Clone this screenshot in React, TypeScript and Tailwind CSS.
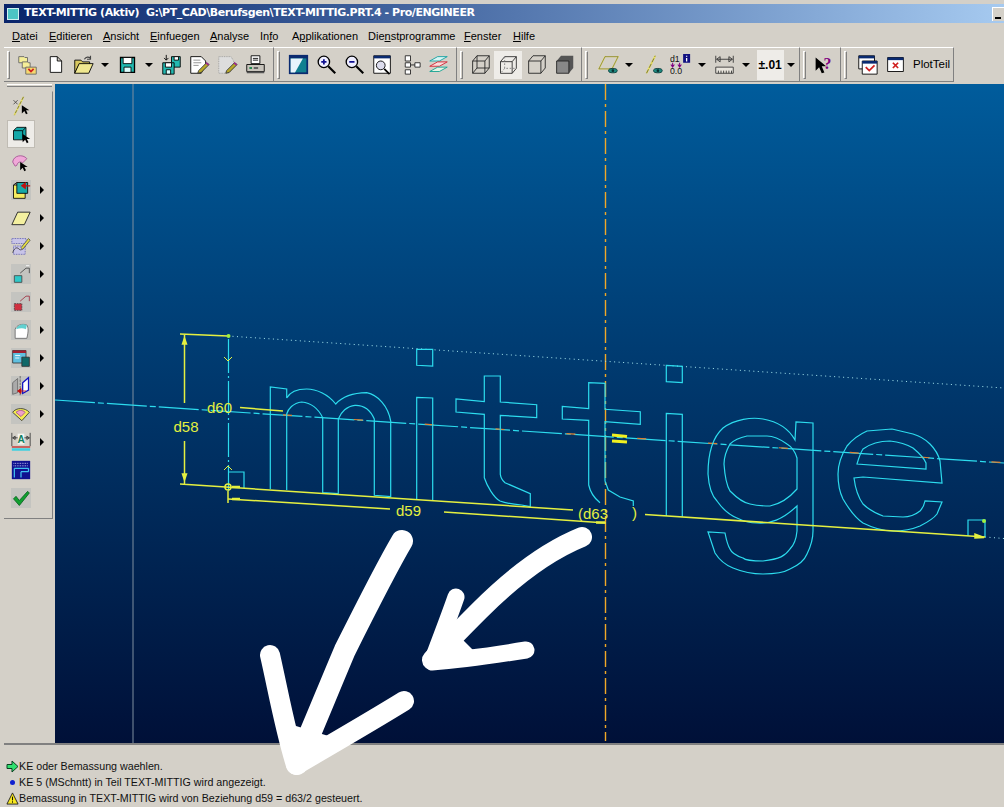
import type { ReactNode } from "react"

function Ic({ children, size = 24 }: { children: ReactNode; size?: number }) {
  return (
    <svg width={size} height={size} viewBox="0 0 24 24" className="block">
      {children}
    </svg>
  )
}

const k = "#000"
const eye = (
  <g>
    <ellipse cx="17" cy="19" rx="5" ry="2.5" fill="#1d8a80" stroke="#0b3a3a" />
    <circle cx="17" cy="19" r="1.5" fill="#083030" />
  </g>
)

const toolIcons: Record<string, ReactNode> = {
  tree: (
    <>
      <path d="M2 3h6l1 1h3v6H2z" fill="#f5ee98" stroke="#666" />
      <path d="M6 9h6l1 1h2v6H6z" fill="#f5ee98" stroke="#666" />
      <path d="M10 15h12v8H10z" fill="#f5d870" stroke="#666" />
      <path d="M13 17l3 3 3-3" fill="none" stroke="#d02020" strokeWidth="2" />
    </>
  ),
  page: <path d="M6 3h8l5 5v13H6z M14 3v5h5" fill="#fff" stroke={k} />,
  open: (
    <>
      <path d="M2 7h7l2 2h8v3H7L2 22z" fill="#d8c860" stroke={k} />
      <path d="M2 22l5-11h16l-5 11z" fill="#f0e890" stroke={k} />
      <path d="M13 6c2-3 5-3 7-1M20 2v4h-4" fill="none" stroke="#444" strokeWidth="1.3" />
    </>
  ),
  save: (
    <>
      <path d="M4 4h16v17H4z" fill="#22b8b0" stroke={k} strokeWidth="1.5" />
      <path d="M7 4h10v7H7z" fill="#fff" stroke={k} />
      <path d="M8 15h8v6H8z" fill="#dff" stroke={k} />
    </>
  ),
  saveall: (
    <>
      <path d="M12 3h10v12H12z" fill="#22b8b0" stroke={k} />
      <path d="M15 3h5v4h-5z" fill="#fff" stroke={k} />
      <path d="M2 10h13v13H2z" fill="#22b8b0" stroke={k} />
      <path d="M5 10h7v5H5z" fill="#fff" stroke={k} />
      <path d="M6 18h5v5H6z" fill="#dff" stroke={k} />
      <path d="M6 1v6M3.500 4.500L6 7l2.500-2.500" fill="none" stroke={k} />
    </>
  ),
  docpen: (
    <>
      <path d="M2 3h12l5 5v5l-5 9H2z" fill="#fff" stroke={k} />
      <path d="M5 7h8M5 10h9M5 13h6" stroke="#888" />
      <path d="M11 19l9-9 3 2-9 9-4 1z" fill="#b8a828" stroke="#333" />
      <path d="M19 11l3 2 1-1-3-3z" fill="#a02890" />
    </>
  ),
  dotpen: (
    <>
      <path d="M2 3h14l3 5v5l-5 9H2z" fill="#ddd" stroke="#999" strokeDasharray="1 1" />
      <path d="M11 19l9-9 3 2-9 9-4 1z" fill="#b8a828" stroke="#333" />
      <path d="M19 11l3 2 1-1-3-3z" fill="#a02890" />
    </>
  ),
  print: (
    <>
      <path d="M7 2h10v9H7z" fill="#fff" stroke={k} />
      <path d="M9 5h6M9 7h6" stroke={k} />
      <path d="M2 12h20v8H2z" fill="#c8c4bc" stroke={k} />
      <path d="M2 20h20v2H2z" fill="#555" />
      <path d="M5 16h3" stroke="#108040" strokeWidth="2" />
      <path d="M10 16h5" stroke="#555" strokeWidth="2" />
    </>
  ),
  repaint: (
    <>
      <path d="M1 1h22v22H1z" fill="#0a2a70" />
      <path d="M3 5h18v16H3z" fill="#108090" />
      <path d="M3 5h14L8 21H3z" fill="#e8f4fc" />
    </>
  ),
  zoomin: (
    <>
      <circle cx="9" cy="9" r="6.500" fill="#eef" stroke={k} strokeWidth="1.500" />
      <path d="M6 9h6M9 6v6" stroke="#101090" strokeWidth="2" />
      <path d="M14 14l8 8" stroke={k} strokeWidth="2.500" />
    </>
  ),
  zoomout: (
    <>
      <circle cx="9" cy="9" r="6.500" fill="#eef" stroke={k} strokeWidth="1.500" />
      <path d="M6 9h6" stroke="#101090" strokeWidth="2" />
      <path d="M14 14l8 8" stroke={k} strokeWidth="2.500" />
    </>
  ),
  zoomwin: (
    <>
      <path d="M2 2h19v20H2z" fill="#fff" stroke={k} />
      <path d="M2 2h19v3H2z" fill="#0a2a70" />
      <circle cx="10" cy="13" r="5" fill="#dde" stroke={k} />
      <path d="M14 17l6 6" stroke={k} strokeWidth="2" />
    </>
  ),
  nodes: (
    <>
      <path d="M6 2h6v6H6zM6 18h6v5H6zM6 10h6v5H6zM17 10h6v5h-6z" fill="#fff" stroke="#222" />
      <path d="M12 12.500h5" stroke="#222" />
    </>
  ),
  layers: (
    <>
      <path d="M2 8l9-5h11l-9 5z" fill="#d8f4f4" stroke="#10a0a0" />
      <path d="M2 14l9-5h11l-9 5z" fill="#fbdcdc" stroke="#d02030" />
      <path d="M2 20l9-5h11l-9 5z" fill="#e4f4e4" stroke="#10a090" />
    </>
  ),
  wire: <path d="M3 8h14v14H3zM3 8l5-6h14v14l-5 6M8 2v14h14M8 16l-5 6M17 8l5-6" fill="none" stroke="#222" />,
  wirehid: (
    <>
      <path d="M3 8h14v14H3zM3 8l5-6h14v14l-5 6M17 8l5-6" fill="none" stroke="#222" />
      <path d="M8 2v14h14M8 16l-5 6" fill="none" stroke="#777" strokeDasharray="2 2" />
    </>
  ),
  hidden: <path d="M3 8h14v14H3zM3 8l5-6h14v14l-5 6M17 8l5-6" fill="none" stroke="#222" />,
  shade: (
    <>
      <path d="M3 8l5-6h14v14l-5 6z" fill="#555" />
      <path d="M3 8h14v14H3z" fill="#888" stroke="#222" />
    </>
  ),
  planes: (
    <>
      <path d="M1 17L8 3h15l-7 14z" fill="none" stroke="#e8e060" strokeWidth="1.500" />
      <path d="M1 17L8 3h15l-7 14z" fill="none" stroke="#333" strokeWidth=".5" />
      {eye}
    </>
  ),
  axes: (
    <>
      <path d="M4 22L14 2" stroke="#e8e060" strokeWidth="2" />
      <path d="M4 22L14 2" stroke="#333" strokeWidth=".7" strokeDasharray="5 2" />
      {eye}
    </>
  ),
  dims: (
    <>
      <text x="0" y="9" fontSize="10" fill="#111" fontFamily="Liberation Sans, sans-serif">d1</text>
      <text x="0" y="23" fontSize="10" fill="#111" fontFamily="Liberation Sans, sans-serif">0.0</text>
      <path d="M3 10v5M1 12l2 3 2-3M11 10v5M9 12l2 3 2-3" fill="none" stroke="#800080" strokeWidth="1.200" />
      <path d="M15 0h8v10h-8z" fill="#101080" />
      <path d="M19 2v1M19 4.500v4" stroke="#fff" strokeWidth="1.500" />
    </>
  ),
  ruler: (
    <>
      <path d="M2 2v8M22 2v8M3 6h18M3 6l4-3v6zM21 6l-4-3v6z" fill="none" stroke="#333" />
      <path d="M2 15h20v7H2z" fill="#e8e4dc" stroke="#333" />
      <path d="M5 19v3M8 19v3M11 19v3M14 19v3M17 19v3M20 19v3" stroke="#333" />
    </>
  ),
  help: (
    <>
      <path d="M3 4l0 15 4-4 3 7 3-1-3-7h5z" fill={k} />
      <text x="12" y="17" fontSize="18" fontWeight="700" fill="#800080" fontFamily="Liberation Serif, serif">?</text>
    </>
  ),
  winok: (
    <>
      <path d="M2 2h18v15H2z" fill="#fff" stroke={k} />
      <path d="M2 2h18v3H2z" fill="#0a2a70" />
      <path d="M6 8h17v15H6z" fill="#fff" stroke={k} />
      <path d="M6 8h17v3H6z" fill="#0a2a70" />
      <path d="M10 15l4 4 6-6" fill="none" stroke="#d02020" strokeWidth="2" />
    </>
  ),
  winx: (
    <>
      <path d="M3 4h18v16H3z" fill="#fff" stroke={k} />
      <path d="M3 4h18v3H3z" fill="#0a2a70" />
      <path d="M9 10l6 6M15 10l-6 6" stroke="#d02020" strokeWidth="2" />
    </>
  ),
}

const sideIcons: ReactNode[] = [
  <>
    <path d="M15 1L4 23" stroke="#e8e060" strokeWidth="2" />
    <path d="M15 1L4 23" stroke="#333" strokeWidth=".7" strokeDasharray="4 2" />
    <path d="M3 5l5 5M8 5l-5 5" stroke="#444" />
    <path d="M13 11v10l3-3 2 4 2-1-2-4h4z" fill={k} />
  </>,
  <>
    <path d="M3 8l4-4h11v11l-4 4H3z" fill="#16a8a8" stroke={k} />
    <path d="M3 8h11v11M14 8l4-4" fill="none" stroke={k} />
    <path d="M14 12v10l3-3 2 4 2-1-2-4h4z" fill={k} />
  </>,
  <>
    <path d="M2 12c1-8 12-10 17-4l-5 5c-3-2-6-1-7 3l-2 1z" fill="#f0a8d8" stroke="#a05090" />
    <path d="M11 12v10l3-3 2 4 2-1-2-4h4z" fill={k} />
  </>,
  <>
    <path d="M0 0h24v24H0z" fill="#c4c4c0" />
    <path d="M3 6h14v16H3z" fill="#f4ec60" stroke={k} />
    <path d="M7 3h13v13H7z" fill="#16a8a8" stroke={k} />
    <path d="M3 6l4-3" stroke={k} />
    <path d="M13 7h10M13 7l4-3v6z" stroke="#c01010" fill="#c01010" strokeWidth="1.500" />
  </>,
  <path d="M1 20L8 5h15l-7 15z" fill="#f4f0a0" stroke="#333" strokeWidth="1.200" />,
  <>
    <path d="M1 3h17v6H1zM3 12h14v10H3z" fill="#c8c4e8" stroke="#5050b0" strokeDasharray="1 1" />
    <path d="M2 20c3-8 6-6 8-4s5-1 7-4" fill="none" stroke="#333" />
    <path d="M12 14L21 3l2 2-9 11z" fill="#e8e040" stroke="#555" />
  </>,
  <>
    <path d="M0 0h24v24H0z" fill="#c4c4c0" />
    <path d="M4 14h9v8H4z" fill="#30c8c8" stroke="#444" />
    <path d="M11 11L18 5h4v6" fill="none" stroke="#444" />
    <path d="M18 2h4" stroke="#fff" />
  </>,
  <>
    <path d="M0 0h24v24H0z" fill="#c4c4c0" />
    <path d="M4 14h9v8H4z" fill="#d03040" stroke="#444" strokeDasharray="2 1" />
    <path d="M11 11L18 5h4v6" fill="none" stroke="#a03040" />
  </>,
  <>
    <path d="M0 0h24v24H0z" fill="#c4c4c0" />
    <path d="M5 22V11c2-5 8-7 14-5 2 3 2 8 0 16z" fill="#fff" stroke="#666" />
    <path d="M6 11c2-5 8-7 13-5l-1 5c-4-2-8-1-12 0z" fill="#60d0d0" />
  </>,
  <>
    <path d="M0 0h24v24H0z" fill="#c4c4c0" />
    <path d="M2 3h16v15H2z" fill="#60c0e0" stroke="#333" />
    <path d="M2 3h16v3H2z" fill="#a02030" />
    <path d="M13 11h9v11h-9z" fill="#0f6868" stroke="#333" />
    <path d="M5 9h6M5 12h5" stroke="#fff" />
  </>,
  <>
    <path d="M0 0h24v24H0z" fill="#c4c4c0" />
    <path d="M2 8l6-5v17l-6 2z" fill="#aaa" stroke="#666" />
    <path d="M14 8l7-6v15l-7 4z" fill="#fff" stroke="#1010c0" strokeWidth="1.500" />
    <path d="M11 0v24" stroke="#555" strokeDasharray="3 1" />
    <path d="M18 18H8M8 18l4-3v6z" stroke="#c01010" fill="#c01010" />
  </>,
  <>
    <path d="M0 0h24v24H0z" fill="#c4c4c0" />
    <path d="M2 10C6 4 17 4 22 10l-9 10z" fill="#f4ec50" stroke="#333" />
    <path d="M6 10c3-3 8-3 11 0l-5 5z" fill="#f0a0c8" stroke="#a05090" />
  </>,
  <>
    <path d="M1 1v16M23 1v16M2 7h20M2 7l3-2v4zM22 7l-3-2v4z" fill="none" stroke="#333" />
    <path d="M8 2h8v13H8z" fill="#f4f4f0" />
    <text x="12" y="13" textAnchor="middle" fontSize="12" fontWeight="700" fill="#108060" fontFamily="Liberation Sans, sans-serif">A</text>
    <path d="M1 18h22" stroke="#c02020" strokeWidth="1.500" />
    <path d="M1 21h22" stroke="#40d0e0" strokeWidth="3" />
  </>,
  <>
    <path d="M1 1h22v22H1z" fill="#101090" />
    <path d="M3 4h18M3 7h18" stroke="#e0e0ff" strokeDasharray="1 1" />
    <path d="M4 10h17M4 10v11M21 10v4M12 14h9M12 14v7" fill="none" stroke="#40c0f0" strokeWidth="1.500" />
  </>,
  <>
    <path d="M0 0h24v24H0z" fill="#c4c4c0" />
    <path d="M3 13l3-3 4 5L20 4l2 2-12 15z" fill="#10a030" stroke="#0a6020" />
  </>,
]

function Tool({ id, pressed }: { id: string; pressed?: boolean }) {
  return (
    <div className={`w-[28px] h-[28px] flex items-center justify-center ${pressed ? "bg-[#eeece8]" : ""}`}>
      <Ic size={pressed ? 20 : 21}>{toolIcons[id]}</Ic>
    </div>
  )
}

function Caret() {
  return <div className="w-[16px] flex justify-center"><div className="border-x-[4px] border-x-transparent border-t-[4px] border-t-black" /></div>
}

function Band({ children, className }: { children: ReactNode; className: string }) {
  return (
    <div className={`h-[35px] flex items-center shrink-0 border-t border-t-white border-r border-r-[#808080] border-b border-b-[#808080] pl-[3px] ${className}`}>
      <div className="w-[3px] h-[28px] border-l border-t border-white border-r border-b border-r-[#808080] border-b-[#808080] shrink-0" />
      {children}
    </div>
  )
}

const menu = [
  ["", "D", "atei", "w-[37px]"],
  ["", "E", "ditieren", "w-[54px]"],
  ["", "A", "nsicht", "w-[47px]"],
  ["", "E", "infuegen", "w-[60px]"],
  ["", "A", "nalyse", "w-[50px]"],
  ["In", "f", "o", "w-[32px]"],
  ["A", "p", "plikationen", "w-[76px]"],
  ["Die", "n", "stprogramme", "w-[96px]"],
  ["", "F", "enster", "w-[49px]"],
  ["", "H", "ilfe", "w-[40px]"],
]

function Drawing() {
  const lines = "#2cdcee"
  const dim = "#e4f040"
  return (
    <svg viewBox="55 83 949 660" width="949" height="660" className="block" fill="none">
      <path d="M133 83V743" stroke="#7f8f9f" strokeWidth="1" />
      <path d="M605.500 83V740" stroke="#f0a828" strokeWidth="1.400" strokeDasharray="16 4 3 4" />
      <path d="M55 399L1004 462" stroke={lines} strokeWidth="1.200" strokeDasharray="40 3 6 3" />
      <path d="M283 413.800L1004 461.700" stroke="#e08030" strokeWidth="1.200" strokeDasharray="9 62" />
      <path d="M228 335L1004 387" stroke="#a8e8f0" strokeDasharray="1 3.500" />
      <path d="M985 536L1004 537.500" stroke="#a8e8f0" strokeDasharray="1 3.500" />

      <g stroke={lines} strokeWidth="1.200">
        <path d="M270.300 488V386L286.700 388V397C290 391 298 388 306.700 388C316 388 328 393 335.700 403C342 396 352 392 366.700 391.700C378 394 388 405 390.700 420V495.700L374.300 494.300V418C370 408 363 404 355 404.300C347 405 341 411 338.300 418V492.700L322.700 491.700V416.700C318 407 311 402 301.700 401C293 402 288 408 286.700 413V489" />
        <path d="M416.700 498.300V396.300L432.700 397V499M416.700 348.300H432.700V365L416.700 364.300Z" />
        <path d="M484.300 375H500.300V401L536.700 403.700V416.700L500.300 414.300V473.300C501 478 503 480 505 481.700L530.300 492.700V505.700L521.700 504C510 503 505 502 500 500C494 497 487 485 484.300 476.700V413.300L456 411V398L484.300 400.700Z" />
        <path d="M600 501.700C594 497 590 490 588.700 484V419.300L562.300 418V405.300L588.700 407.700V381.700L605 382.300V408.300L640.300 410.700V423.300L605 420.700V480L608.300 489L620 496L633.300 500V505" />
        <path d="M666.300 515V412.300L682.300 413.300V515.700M666.300 364.300L682.300 365.300V381.700L666.300 380.700Z" />
        <path d="M795 439C790 430 780 421 763 418C752 416 735 418 723 427C713 436 708 452 708 473C709 488 712 495 717 500C724 510 732 515 737 517C745 521 750 522 757 522C770 523 782 519 797 505V530C796 541 793 545 790 548C785 555 780 558 763 560C752 560 745 559 743 557C737 555 732 553 730 548C727 543 726 537 725 532L708 531L715 552C720 560 728 565 733 567C745 572 755 573 763 573C775 573 785 571 790 568C799 564 805 558 807 553C811 545 813 538 813 530V422L796 421Z" />
        <path d="M797 457C795 450 792 446 787 443C780 438 772 435 767 435H747C738 437 733 440 730 443C726 450 724 456 724 463C725 478 727 485 730 490C737 497 744 502 750 503C758 505 765 505 770 505C780 503 790 496 797 488Z" />
        <path d="M942 482L940 460C938 452 934 447 930 443C925 438 920 435 913 433L892 428L867 430C858 434 852 439 847 445C842 453 838 463 838 473C838 485 840 492 843 498C850 510 857 518 863 522C875 528 885 530 893 530C905 530 913 528 920 525C928 521 934 517 937 513L942 501L925 500C924 505 922 508 920 510C915 514 908 516 903 516L883 515C875 512 868 508 863 503C858 496 855 485 854 477L863 476Z" />
        <path d="M857 463C859 456 861 451 863 448C870 443 880 440 890 440C900 441 908 444 913 447C919 452 924 457 926 462V468Z" />
        <path d="M228 471H244V487M968 535V519H985V536" />
        <path d="M228.500 338V490" strokeDasharray="34 3 2 3" />
      </g>

      <g stroke={dim} strokeWidth="1.500">
        <path d="M180 333L228 335M184.500 333V402M184.500 440V483M180 483L573 509M645 513.500L985 536" />
        <path d="M228 490V502" />
        <path d="M228 498L390 508M444 511L606 522" />
        <path d="M240 406.500L283 410" />
        <path d="M224 356L228 360L232 356M224 469L228 465L232 469" strokeWidth="1" />
        <circle cx="228" cy="486" r="3" />
        <path d="M232 486h8M232 498h8" strokeWidth="2.500" />
        <path d="M184.500 337l-2 6h4zM184.500 479l-2-6h4z" fill={dim} />
        <path d="M596 521.500h9" strokeWidth="2.500" />
        <path d="M975 533v4l9-.5z" fill={dim} />
      </g>
      <circle cx="228.500" cy="335" r="2" fill="#a0f040" />
      <circle cx="984" cy="520" r="2" fill="#a0f040" />
      <path d="M612 434l15 1.500M612 440l15 1" stroke="#f0f020" strokeWidth="3" />

      <g fill={dim} fontFamily="Liberation Sans, sans-serif" fontSize="15">
        <text x="173.500" y="431">d58</text>
        <text x="207" y="412">d60</text>
        <text x="396" y="515">d59</text>
        <text x="578" y="518">(d63</text>
        <text x="632" y="517">)</text>
      </g>
    </svg>
  )
}

export default function App() {
  return (
    <div className="relative w-[1004px] h-[807px] overflow-hidden bg-[#d4d0c8] pl-[4px] pt-[4px] flex flex-col font-['Liberation_Sans',sans-serif] text-[11px] text-black">
      {/* title */}
      <div className="h-[19px] shrink-0 flex items-center pl-[3px] bg-gradient-to-r from-[#0a246a] to-[#a6caf0]">
        <div className="w-[12px] h-[12px] mr-[5px] bg-[#4cc4c4] border border-[#d0f0f0]" />
        <span className="text-white text-[11px] font-bold font-['DejaVu_Sans',sans-serif] tracking-[-0.43px] whitespace-pre">TEXT-MITTIG (Aktiv)  G:\PT_CAD\Berufsgen\TEXT-MITTIG.PRT.4 - Pro/ENGINEER</span>
        <div className="ml-auto w-[12px] h-[14px] bg-[#d4d0c8] border-l border-t border-white flex items-end pl-[2px] pb-[2px]"><div className="w-[6px] h-[2px] bg-black" /></div>
      </div>

      {/* menu */}
      <div className="h-[24px] shrink-0 flex items-center pl-[8px] pt-[2px] text-[11px]">
        {menu.map(([a, u, b, w]) => (
          <span key={a + u + b} className={`${w} shrink-0 whitespace-nowrap`}>
            {a}<span className="underline">{u}</span>{b}
          </span>
        ))}
      </div>

      {/* toolbars */}
      <div className="h-[35px] shrink-0 flex items-center">
        <Band className="w-[270px]">
          <div className="w-[3px]" />
          <Tool id="tree" /><Tool id="page" /><Tool id="open" /><Caret /><Tool id="save" /><Caret /><Tool id="saveall" /><Tool id="docpen" /><Tool id="dotpen" /><Tool id="print" />
        </Band>
        <Band className="w-[183px]">
          <div className="w-[4px]" />
          <Tool id="repaint" /><Tool id="zoomin" /><Tool id="zoomout" /><Tool id="zoomwin" /><Tool id="nodes" /><Tool id="layers" />
        </Band>
        <Band className="w-[125px]">
          <div className="w-[3px]" />
          <Tool id="wire" /><Tool id="wirehid" pressed /><Tool id="hidden" /><Tool id="shade" />
        </Band>
        <Band className="w-[218px]">
          <div className="w-[7px]" />
          <Tool id="planes" /><Caret />
          <div className="w-[3px]" /><Tool id="axes" /><Tool id="dims" />
          <Caret />
          <div className="w-[2px]" /><Tool id="ruler" /><Caret />
          <div className="w-[3px]" />
          <div className="w-[28px] h-[30px] bg-[#eeece8] flex items-center justify-center font-bold text-[12px]">±.01</div>
          <Caret />
        </Band>
        <Band className="w-[41px]">
          <div className="w-[3px]" />
          <Tool id="help" />
        </Band>
        <Band className="w-[113px]">
          <div className="w-[6px]" />
          <Tool id="winok" /><Tool id="winx" />
          <span className="ml-[4px] text-[11.500px]">PlotTeil</span>
        </Band>
      </div>

      {/* main */}
      <div className="flex flex-1 min-h-0 mt-[1px] pt-[1px]">
        <div className="w-[51px] shrink-0 relative">
          <div className="h-[3px] mx-[3px] border-t border-white border-b border-b-[#808080]" />
          <div className="mt-[4px] flex flex-col pb-[6px] border-b border-b-[#808080] border-r border-r-[#808080] mr-[2px] border-t border-t-transparent">
            {sideIcons.map((icon, i) => (
              <div key={i} className="h-[28px] flex items-center relative">
                <div className={`ml-[3px] w-[28px] h-[28px] flex items-center justify-center ${i === 1 ? "bg-[#eeece8] border border-[#c0bcb4]" : ""}`}>
                  <Ic size={20}>{icon}</Ic>
                </div>
                {i >= 3 && i <= 12 && <div className="ml-[5px] border-y-[4px] border-y-transparent border-l-[4px] border-l-black" />}
              </div>
            ))}
          </div>
        </div>
        <div className="flex-1 min-w-0 h-[660px] bg-gradient-to-b from-[#005c9c] to-[#001038]">
          <Drawing />
        </div>
      </div>

      {/* messages */}
      <div className="h-[64px] shrink-0 border-t-2 border-t-[#808080] pt-[13px] text-[10.700px] leading-[16px] text-[#111]">
        <div className="flex items-center pl-[2px]">
          <svg width="13" height="13" viewBox="0 0 13 13"><path d="M1 4.500h5V1l6 5.500L6 12V8.500H1z" fill="#30e070" stroke="#0a4020" /></svg>
          <span>KE oder Bemassung waehlen.</span>
        </div>
        <div className="flex items-center pl-[6px]">
          <div className="w-[5px] h-[5px] rounded-full bg-[#1020d0] mr-[4px]" />
          <span>KE 5 (MSchntt) in Teil TEXT-MITTIG wird angezeigt.</span>
        </div>
        <div className="flex items-center pl-[2px]">
          <svg width="13" height="13" viewBox="0 0 14 14"><path d="M7 1l6 12H1z" fill="#f8e820" stroke="#222" /><path d="M7 5v4M7 10v1.500" stroke="#000" /></svg>
          <span>Bemassung in TEXT-MITTIG wird von Beziehung d59 = d63/2 gesteuert.</span>
        </div>
      </div>

      {/* hand drawn arrows over canvas and messages */}
      <svg width="1004" height="807" viewBox="0 0 1004 807" fill="none" className="absolute inset-0 pointer-events-none">
        <g stroke="#fff" strokeLinecap="round" strokeLinejoin="round">
          <path d="M582 537C545 552 510 580 480 610C462 628 445 645 432 660" strokeWidth="20" />
          <path d="M456 597C448 620 440 640 432 662C460 660 495 655 526 650" strokeWidth="17" />
          <path d="M402 541C385 570 365 610 345 650C328 690 312 730 297 764" strokeWidth="22" />
          <path d="M270 655C278 690 285 730 296 765C330 745 370 722 404 701" strokeWidth="20" />
        </g>
        <path d="M432 662L448 625L475 652Z" fill="#fff" />
        <path d="M296 768L283 722L335 738Z" fill="#fff" />
      </svg>
    </div>
  )
}
